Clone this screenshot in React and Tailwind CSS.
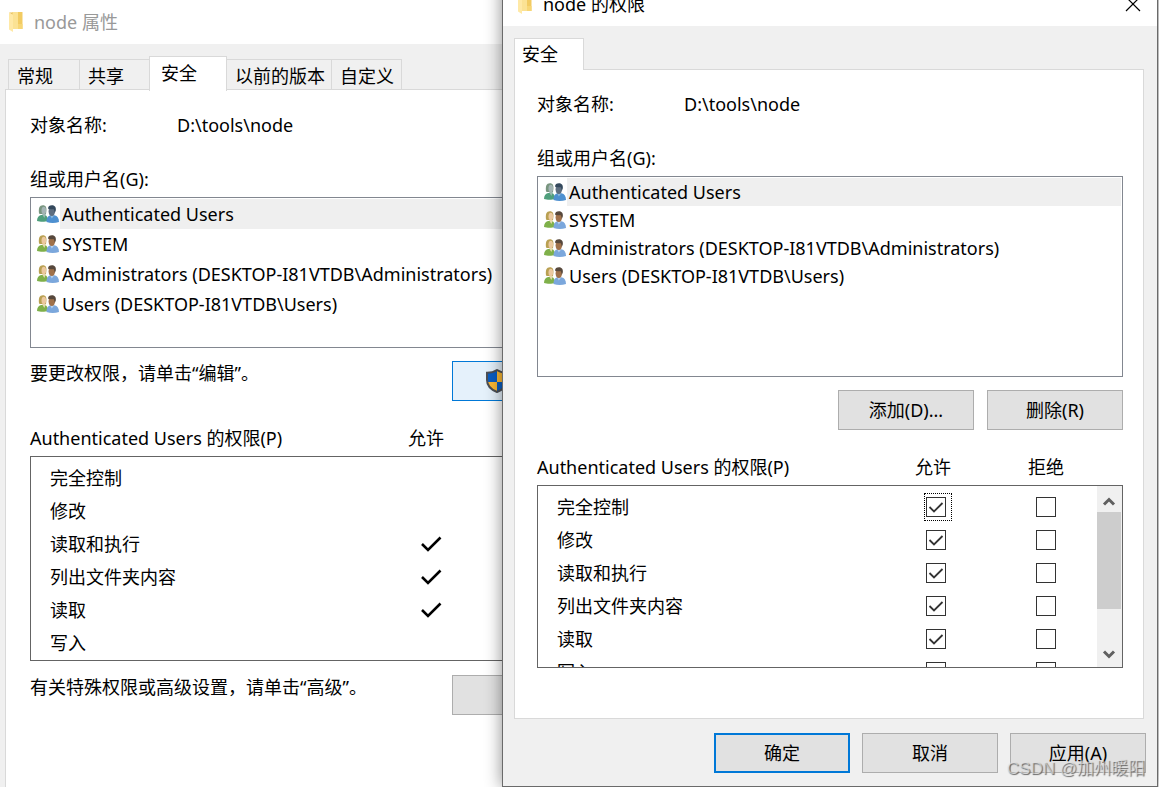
import React from 'react';

const users = [
  'Authenticated Users',
  'SYSTEM',
  'Administrators (DESKTOP-I81VTDB\\Administrators)',
  'Users (DESKTOP-I81VTDB\\Users)',
];

const permissions = ['完全控制', '修改', '读取和执行', '列出文件夹内容', '读取', '写入'];

const FolderIcon = () => (
  <svg width="16" height="22" viewBox="0 0 16 22" className="shrink-0" aria-hidden="true">
    <path d="M4 1h10.5v17H4z" fill="#f2cb62" />
    <path d="M4 1h6v17H4z" fill="#fbe294" />
    <path d="M1 1.5l4 2.2V21l-4-2.6z" fill="#ffe9a6" />
    <path d="M1 1.5h3.5v2z" fill="#e8bd55" />
    <path d="M10 13h4.5v5H10z" fill="#f7d675" />
  </svg>
);

const UsersIcon = ({ selected }) => (
  <svg width="22" height="18" viewBox="0 0 22 18" className="shrink-0" aria-hidden="true">
    <path d="M0 16c0-3.500 1.500-5.200 4-6h4c2 .8 3 2.500 3 6-3 1-8 1-11 0z" fill={selected ? '#4f9f7c' : '#7fb04a'} />
    <path d="M2 8.500C1.300 3 2.500.2 5.800.2s3.800 2.300 3.600 5.600L9 9H3z" fill={selected ? '#78957f' : '#b9a052'} />
    <ellipse cx="6.800" cy="5.600" rx="2.300" ry="3.800" fill={selected ? '#a4b5b5' : '#ecc9a0'} />
    <path d="M5 9l2.300 4 1.700-4z" fill={selected ? '#9ab9b0' : '#e6d9ac'} />
    <path d="M9.500 17c0-4.300 1.500-6 4-6.800h4c3 .8 4.500 3 4.500 6.800-4 1.200-8.500 1.200-12.500 0z" fill={selected ? '#4d90d0' : '#7ba7dc'} />
    <path d="M13 10l1.800 3.500L17.500 10z" fill={selected ? '#8bb8dd' : '#b9d2ee'} />
    <ellipse cx="14.800" cy="6.300" rx="3.200" ry="4.700" fill={selected ? '#5d6e80' : '#a0714a'} />
    <path d="M11 3.800C11 1.300 12.500.2 15 .2c3 0 4.300 2.300 3.800 5.300L17.800 8c-.2-2-.7-3.500-1.500-4-1.500.4-3.300.4-5.300-.2z" fill={selected ? '#34495d' : '#57483c'} />
  </svg>
);

const ShieldIcon = () => (
  <svg width="22" height="24" viewBox="0 0 22 24" className="shrink-0" aria-hidden="true">
    <path d="M11 1C8 3 5 3.800 1 3.800V13h10z" fill="#0a5dc2" />
    <path d="M11 1c3 2 6 2.800 10 2.800V13H11z" fill="#fdb933" />
    <path d="M1 13c1 5 5 8.500 10 10V13z" fill="#fdb933" />
    <path d="M21 13c-1 5-5 8.500-10 10V13z" fill="#0a5dc2" />
    <path d="M11 1C8 3 5 3.800 1 3.800V11c0 6 5 10 10 12 5-2 10-6 10-12V3.800C17 3.800 14 3 11 1z" fill="none" stroke="#4c4f55" strokeWidth="2" />
  </svg>
);

const BoldTick = () => (
  <svg width="22" height="18" viewBox="0 0 22 18" role="img" aria-label="允许">
    <path d="M2 9l6 6L20.500 2.500" fill="none" stroke="#000" strokeWidth="2.600" />
  </svg>
);

const TitleBar = ({ title, active }) => (
  <header className="flex h-11 shrink-0 items-center bg-white">
    <FolderIcon />
    <h2 className={`ml-2.5 flex-1 text-lg leading-6 ${active ? 'text-black' : 'text-[#999]'}`}>{title}</h2>
    {active && (
      <button type="button" aria-label="关闭" className="px-4">
        <svg width="16" height="16" viewBox="0 0 16 16" aria-hidden="true">
          <path d="M1 1l14 14M15 1L1 15" stroke="#000" strokeWidth="1.200" />
        </svg>
      </button>
    )}
  </header>
);

const UserList = ({ rowStyle, boxStyle }) => (
  <ul className={`mt-1.5 border border-[#828790] bg-white p-px ${boxStyle}`}>
    {users.map((user, i) => (
      <li key={user} className={`flex items-center pl-[5px] ${rowStyle}`}>
        <UsersIcon selected={i === 0} />
        <span className={`ml-px flex h-full flex-1 items-center pl-0.5 whitespace-nowrap ${i === 0 ? 'bg-[#efefef]' : ''}`}>
          {user}
        </span>
      </li>
    ))}
  </ul>
);

const ObjectName = () => (
  <>
    <div className="flex">
      <span className="w-[147px]">对象名称:</span>
      <span>D:\tools\node</span>
    </div>
    <p className="mt-[30px]">组或用户名(G):</p>
  </>
);

const CheckBox = ({ label, checked, focused }) => {
  const [on, setOn] = React.useState(checked);

  return (
    <label className={`mx-auto flex h-7 w-7 items-center pl-0.5 ${focused ? 'outline-1 -outline-offset-1 outline-dotted outline-black' : ''}`}>
      <span className="grid place-items-center">
        <input
          type="checkbox"
          aria-label={label}
          checked={on}
          onChange={(e) => setOn(e.target.checked)}
          className="col-start-1 row-start-1 size-5 appearance-none border border-[#333] bg-white"
        />
        {on && (
          <svg width="16" height="14" viewBox="0 0 16 14" className="pointer-events-none col-start-1 row-start-1" aria-hidden="true">
            <path d="M1.500 7l4.500 4.500L14.500 3" fill="none" stroke="#333" strokeWidth="1.800" />
          </svg>
        )}
      </span>
    </label>
  );
};

const DialogButton = ({ text, primary }) => (
  <button
    type="button"
    className={`h-10 w-[136px] bg-[#e1e1e1] ${primary ? 'border-2 border-[#0078d7]' : 'border border-[#adadad]'}`}
  >
    {text}
  </button>
);

const backTabs = [
  { name: '常规', style: 'w-[72px]' },
  { name: '共享', style: 'w-[71px]' },
  { name: '安全', style: 'w-[78px]' },
  { name: '以前的版本', style: 'w-[106px]' },
  { name: '自定义', style: 'w-[71px]' },
];

const PropertiesWindow = () => (
  <section className="flex h-full w-5/6 flex-col bg-[#f0f0f0]">
    <div className="bg-white pl-2">
      <TitleBar title="node 属性" />
    </div>
    <div role="tablist" className="flex items-end pt-3 pl-2">
      {backTabs.map(({ name, style }) => (
        <button
          key={name}
          type="button"
          role="tab"
          aria-selected={name === '安全'}
          className={`-mr-px border border-[#d9d9d9] text-left whitespace-nowrap ${style} ${
            name === '安全' ? 'z-10 -mb-px h-[35px] border-b-0 bg-white pb-0.5 pl-[11px]' : 'h-[31px] pt-0.5 pl-2'
          }`}
        >
          {name}
        </button>
      ))}
    </div>
    <div className="-mt-px ml-[5px] flex-1 border-t border-l border-[#d9d9d9] bg-white pt-[23px] pl-6">
      <ObjectName />
      <UserList rowStyle="h-[30px]" boxStyle="h-[151px]" />
      <div className="mt-[13px] flex items-start">
        <p className="w-[422px]">要更改权限，请单击“编辑”。</p>
        <button
          type="button"
          aria-label="编辑"
          className="flex h-10 w-[136px] items-center border border-[#0078d7] bg-[#e5f1fb] pl-[33px]"
        >
          <ShieldIcon />
        </button>
      </div>
      <div className="mt-[25px] flex">
        <span className="w-[378px]">Authenticated Users 的权限(P)</span>
        <span>允许</span>
      </div>
      <div className="mt-1.5 h-[205px] border border-[#646464] pt-1">
        <table className="w-full table-fixed border-collapse">
          <tbody>
            {permissions.map((name, i) => (
              <tr key={name} className="h-[33px]">
                <th scope="row" className="w-[389px] pl-[19px] text-left font-normal">{name}</th>
                <td>{i >= 2 && i <= 4 && <BoldTick />}</td>
              </tr>
            ))}
          </tbody>
        </table>
      </div>
      <div className="mt-3.5 flex items-start">
        <p className="w-[422px]">有关特殊权限或高级设置，请单击“高级”。</p>
        <button type="button" aria-label="高级" className="h-10 w-[136px] border border-[#adadad] bg-[#e1e1e1]" />
      </div>
    </div>
  </section>
);

const ScrollBar = () => (
  <div className="flex w-[25px] shrink-0 flex-col bg-[#f0f0f0] pr-px">
    <button type="button" aria-label="向上滚动" className="grid h-[26px] place-items-center pt-1">
      <svg width="14" height="11" viewBox="0 0 14 11" aria-hidden="true">
        <path d="M2 8.500l5-5 5 5" fill="none" stroke="#606060" strokeWidth="3" />
      </svg>
    </button>
    <div className="h-[97px] bg-[#cdcdcd]" />
    <button type="button" aria-label="向下滚动" className="mt-auto grid h-[26px] place-items-center">
      <svg width="14" height="11" viewBox="0 0 14 11" aria-hidden="true">
        <path d="M2 2.500l5 5 5-5" fill="none" stroke="#606060" strokeWidth="3" />
      </svg>
    </button>
  </div>
);

const PermissionsWindow = () => (
  <section className="absolute -top-[18px] right-px bottom-0 left-[502px] z-20 flex flex-col border-x border-b border-[#6a6a6a] bg-[#f0f0f0] shadow-[0_0_16px_rgba(0,0,0,0.45)]">
    <div className="bg-white pl-3.5">
      <TitleBar title="node 的权限" active />
    </div>
    <div role="tablist" className="flex pt-3 pl-[11px]">
      <button
        type="button"
        role="tab"
        aria-selected="true"
        className="z-10 -mb-px h-8 w-[70px] border border-b-0 border-[#d9d9d9] bg-white pb-0.5 pl-[7px] text-left"
      >
        安全
      </button>
    </div>
    <div className="mr-[13px] ml-[11px] flex-1 border border-[#d9d9d9] bg-white pt-[22px] pr-5 pl-[22px]">
      <ObjectName />
      <UserList rowStyle="h-7" boxStyle="h-[201px]" />
      <div className="mt-[13px] flex justify-end gap-[13px]">
        <DialogButton text="添加(D)..." />
        <DialogButton text="删除(R)" />
      </div>
      <div className="mt-[25px] flex pr-[26px]">
        <span className="flex-1">Authenticated Users 的权限(P)</span>
        <span className="w-[118px] pr-1.5 text-center">允许</span>
        <span className="w-[102px] text-center">拒绝</span>
      </div>
      <div className="mt-1.5 flex h-[183px] overflow-hidden border border-[#646464]">
        <div className="flex-1 overflow-hidden pt-1">
          <table className="w-full table-fixed border-collapse">
            <tbody>
              {permissions.map((name, i) => (
                <tr key={name} className="h-[33px]">
                  <th scope="row" className="pl-[19px] text-left font-normal">{name}</th>
                  <td className="w-[118px] pl-1">
                    <CheckBox label={`${name} 允许`} checked={i < 5} focused={i === 0} />
                  </td>
                  <td className="w-[102px] pl-1">
                    <CheckBox label={`${name} 拒绝`} checked={false} />
                  </td>
                </tr>
              ))}
            </tbody>
          </table>
        </div>
        <ScrollBar />
      </div>
    </div>
    <footer className="flex justify-end gap-3 pt-3.5 pr-[11px] pb-[13px]">
      <DialogButton text="确定" primary />
      <DialogButton text="取消" />
      <DialogButton text="应用(A)" />
    </footer>
  </section>
);

const App = () => {
  return (
    <main className="relative h-screen overflow-hidden bg-[#f0f0f0] font-['Noto_Sans','Noto_Sans_CJK_SC',sans-serif] text-lg leading-6 text-black">
      <PropertiesWindow />
      <PermissionsWindow />
      <span className="pointer-events-none absolute right-3.5 bottom-1.5 z-30 font-['Liberation_Sans','Noto_Sans_CJK_SC',sans-serif] text-[17px] text-[#e8e8e8]/60 [text-shadow:1px_1px_1px_#666]">
        CSDN @加州暖阳
      </span>
    </main>
  );
};

export default App;
